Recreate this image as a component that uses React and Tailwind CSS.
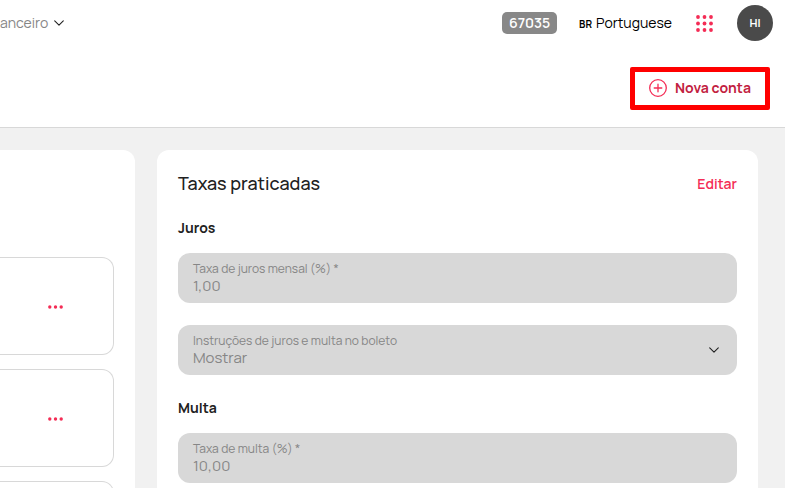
function Chevron({ className }) {
  return (
    <svg viewBox="0 0 10 6" className={className} fill="none" stroke="currentColor" strokeWidth="1.1" strokeLinecap="round" strokeLinejoin="round" aria-hidden="true">
      <path d="M0.7 0.8 5 5.1 9.3 0.8" />
    </svg>
  );
}

function AppsIcon() {
  const steps = [2, 8.5, 15];
  return (
    <svg viewBox="0 0 17 17" className="size-[17px]" fill="#f42c55" aria-hidden="true">
      {steps.map((y) => steps.map((x) => <circle key={`${x}-${y}`} cx={x} cy={y} r="1.9" />))}
    </svg>
  );
}

function PlusCircle() {
  return (
    <svg viewBox="0 0 18 18" className="size-[18px]" fill="none" stroke="#f42c55" strokeWidth="1.3" strokeLinecap="round" aria-hidden="true">
      <circle cx="9" cy="9" r="8.3" />
      <path d="M9 5.2v7.6M5.2 9h7.6" />
    </svg>
  );
}

function AccountItem() {
  return (
    <li className="flex h-[98px] shrink-0 items-center justify-end rounded-r-xl border border-l-0 border-[#d8d8d8] pt-[2px] pr-[50px]">
      <button type="button" aria-label="Mais opções" className="flex h-6 items-center">
        <svg viewBox="0 0 15 4" className="h-1 w-[15px]" fill="#f42c55" aria-hidden="true">
          <circle cx="1.8" cy="2" r="1.7" />
          <circle cx="7.5" cy="2" r="1.7" />
          <circle cx="13.2" cy="2" r="1.7" />
        </svg>
      </button>
    </li>
  );
}

function Field({ id, label, children }) {
  return (
    <div className="flex h-[50px] items-center rounded-xl bg-[#d8d8d8] px-[15px] text-[#868686]">
      <div className="flex min-w-0 flex-1 flex-col">
        <label htmlFor={id} className="text-xs leading-4">{label}</label>
        {children}
      </div>
    </div>
  );
}

const control = "h-[18px] w-full appearance-none bg-transparent p-0 text-[15px] leading-[18px] text-[#868686] opacity-100 outline-none";

export default function App() {
  return (
    <div className="flex h-screen flex-col overflow-hidden bg-[#f1f1f1] font-['Manrope','Inter',sans-serif] text-[#212121]">
      <header className="shrink-0 border-b border-[#d8d8d8] bg-white pb-[17px]">
        <div className="flex h-[46px] items-center justify-between pr-3">
          <button type="button" className="flex items-center gap-[6px] text-sm text-[#868686]">
            anceiro
            <Chevron className="h-[6px] w-[10px] text-[#212121]" />
          </button>
          <div className="flex items-center">
            <span className="flex h-[22px] w-[55px] items-center justify-center rounded-[5px] bg-[#888888] text-sm font-semibold text-white">67035</span>
            <button type="button" className="ml-[22px] flex items-baseline gap-1 text-sm text-black">
              <span className="text-[10px] font-bold">BR</span>
              Portuguese
            </button>
            <button type="button" aria-label="Aplicativos" className="ml-6">
              <AppsIcon />
            </button>
            <button type="button" className="ml-6 size-9 rounded-full bg-[#4a4a4a] text-[11px] font-bold text-white">HI</button>
          </div>
        </div>
        <div className="mt-[21px] flex justify-end pr-[15px]">
          <button type="button" className="flex h-[43px] w-[140px] items-center justify-center gap-2 rounded-[2px] border-[5px] border-[#ff0000] pb-[2px] text-sm font-bold text-[#c2213f]">
            <PlusCircle />
            Nova conta
          </button>
        </div>
      </header>

      <main className="flex min-h-0 flex-1 gap-[22px] pt-[22px] pr-[27px]">
        <section aria-label="Contas" className="w-[135px] shrink-0 rounded-tr-xl bg-white pt-[107px] pr-[21px]">
          <ul className="flex flex-col gap-[14px]">
            <AccountItem />
            <AccountItem />
            <AccountItem />
          </ul>
        </section>

        <section className="min-w-0 flex-1 rounded-t-xl bg-white px-[21px] pt-[22px]">
          <div className="flex h-6 items-center justify-between">
            <h2 className="pb-[2px] text-lg leading-[22px] font-medium">Taxas praticadas</h2>
            <button type="button" className="text-sm font-semibold text-[#f42c55]">Editar</button>
          </div>
          <h3 className="mt-[22px] text-sm leading-5 font-bold">Juros</h3>
          <div className="mt-[15px] flex flex-col gap-[22px]">
            <Field id="juros" label="Taxa de juros mensal (%) *">
              <input id="juros" className={control} defaultValue="1,00" />
            </Field>
            <div className="grid items-center">
              <div className="col-start-1 row-start-1">
                <Field id="instrucoes" label="Instruções de juros e multa no boleto">
                  <select id="instrucoes" className={control}>
                    <option>Mostrar</option>
                  </select>
                </Field>
              </div>
              <Chevron className="pointer-events-none col-start-1 row-start-1 mr-[18px] h-[6px] w-[10px] justify-self-end text-[#212121]" />
            </div>
          </div>
          <h3 className="mt-[23px] text-sm leading-5 font-bold">Multa</h3>
          <div className="mt-[15px]">
            <Field id="multa" label="Taxa de multa (%) *">
              <input id="multa" className={control} defaultValue="10,00" />
            </Field>
          </div>
        </section>
      </main>
    </div>
  );
}
